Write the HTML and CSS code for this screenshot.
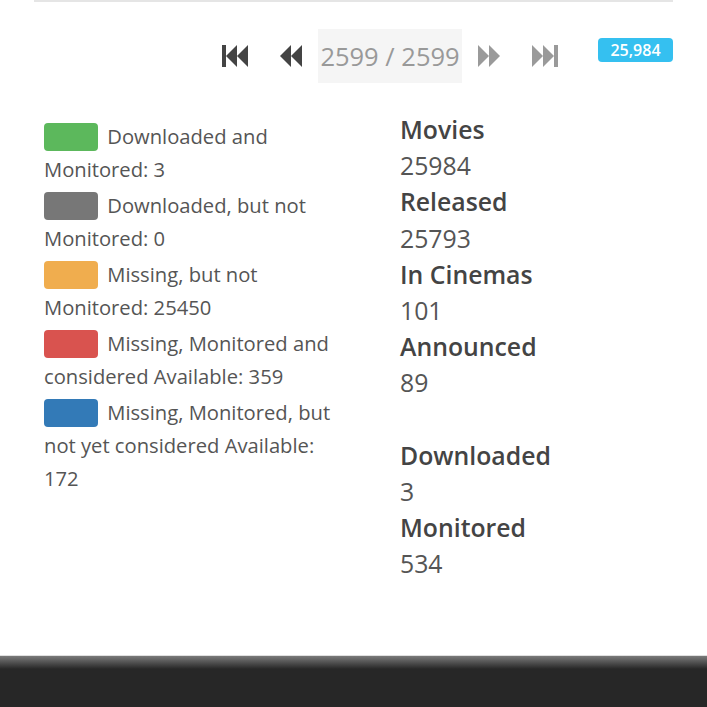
FILE: index.html
```html
<!DOCTYPE html>
<html lang="en">
<head>
    <meta charset="UTF-8">
    <meta name="viewport" content="width=device-width, initial-scale=1.0">
    <title>Movies</title>
    <link rel="stylesheet" href="styles.css">
</head>
<body>
    <div class="page">
        <main class="content">
            <div class="toolbar">
                <div class="pager">
                    <span class="pager-btn">
                        <svg width="26" height="22" viewBox="0 0 26 22"><rect x="0" y="0" width="4" height="22"/><polygon points="4,11 15,0 15,22"/><polygon points="15,11 26,0 26,22"/></svg>
                    </span>
                    <span class="pager-btn">
                        <svg width="22" height="22" viewBox="0 0 22 22"><polygon points="0,11 11,0 11,22"/><polygon points="11,11 22,0 22,22"/></svg>
                    </span>
                    <span class="pager-page">2599 / 2599</span>
                    <span class="pager-btn off">
                        <svg width="22" height="22" viewBox="0 0 22 22"><polygon points="0,0 11,11 0,22"/><polygon points="11,0 22,11 11,22"/></svg>
                    </span>
                    <span class="pager-btn off">
                        <svg width="26" height="22" viewBox="0 0 26 22"><polygon points="0,0 11,11 0,22"/><polygon points="11,0 22,11 11,22"/><rect x="22" y="0" width="4" height="22"/></svg>
                    </span>
                </div>
                <span class="badge">25,984</span>
            </div>

            <div class="stats">
                <div class="legend">
                    <div class="legend-item"><span class="swatch green"></span> Downloaded and Monitored: 3</div>
                    <div class="legend-item"><span class="swatch grey"></span> Downloaded, but not Monitored: 0</div>
                    <div class="legend-item"><span class="swatch orange"></span> Missing, but not Monitored: 25450</div>
                    <div class="legend-item"><span class="swatch red"></span> Missing, Monitored and considered Available: 359</div>
                    <div class="legend-item"><span class="swatch blue"></span> Missing, Monitored, but not yet considered Available: 172</div>
                </div>

                <dl class="counts">
                    <dt>Movies</dt>
                    <dd>25984</dd>
                    <dt>Released</dt>
                    <dd>25793</dd>
                    <dt>In Cinemas</dt>
                    <dd>101</dd>
                    <dt>Announced</dt>
                    <dd>89</dd>
                    <dd class="spacer"></dd>
                    <dt>Downloaded</dt>
                    <dd>3</dd>
                    <dt>Monitored</dt>
                    <dd>534</dd>
                </dl>
            </div>
        </main>
        <footer class="footer"></footer>
    </div>
</body>
</html>
```

FILE: styles.css
```css
* {
    box-sizing: border-box;
    margin: 0;
    padding: 0;
}

html, body {
    height: 100%;
    overflow: hidden;
}

body {
    font-family: "Open Sans", "Noto Sans", Arial, sans-serif;
    background: #fff;
    color: #555;
}

.page {
    min-height: 100vh;
    display: flex;
    flex-direction: column;
}

.content {
    flex: 1;
    margin: 0 34px;
    border-top: 2px solid #e5e5e5;
}

.toolbar {
    display: flex;
    justify-content: flex-end;
    align-items: center;
    margin-top: 27px;
}

.pager {
    display: flex;
    align-items: center;
}

.pager-btn {
    display: flex;
    align-items: center;
    padding: 0 16px;
    height: 54px;
    fill: #444;
}

.pager-btn.off {
    fill: #9a9a9a;
}

.pager-page {
    display: flex;
    align-items: center;
    justify-content: center;
    width: 144px;
    height: 54px;
    background: #f5f5f5;
    color: #999;
    font-size: 25.5px;
}

.badge {
    margin-left: 24px;
    margin-bottom: 12px;
    background: #35c0f0;
    color: #fff;
    font-size: 16px;
    font-weight: 600;
    line-height: 24px;
    padding: 0 8px;
    border-radius: 4px;
    width: 75px;
    text-align: center;
}

.stats {
    display: grid;
    grid-template-columns: 300px 1fr;
    padding: 0 10px;
    margin-top: 28px;
}

.legend {
    font-size: 20.2px;
    line-height: 33px;
    color: #555;
    padding-top: 9px;
}

.legend-item {
    margin-bottom: 3px;
}

.swatch {
    display: inline-block;
    width: 54px;
    height: 28px;
    border-radius: 4px;
    vertical-align: -7px;
    margin-right: 4px;
}

.green { background: #5cb85c; }
.grey { background: #777; }
.orange { background: #f0ad4e; }
.red { background: #d9534f; }
.blue { background: #337ab7; }

.counts {
    padding-left: 56px;
    font-size: 24.8px;
    line-height: 36.2px;
}

.counts dt {
    font-weight: 600;
    color: #444;
}

.counts dd {
    color: #555;
}

.counts .spacer {
    height: 36.2px;
}

.footer {
    height: 52px;
    border-top: 1px solid #e0e0e0;
    background: linear-gradient(#7a7a7a, #272727 13px);
}
```
